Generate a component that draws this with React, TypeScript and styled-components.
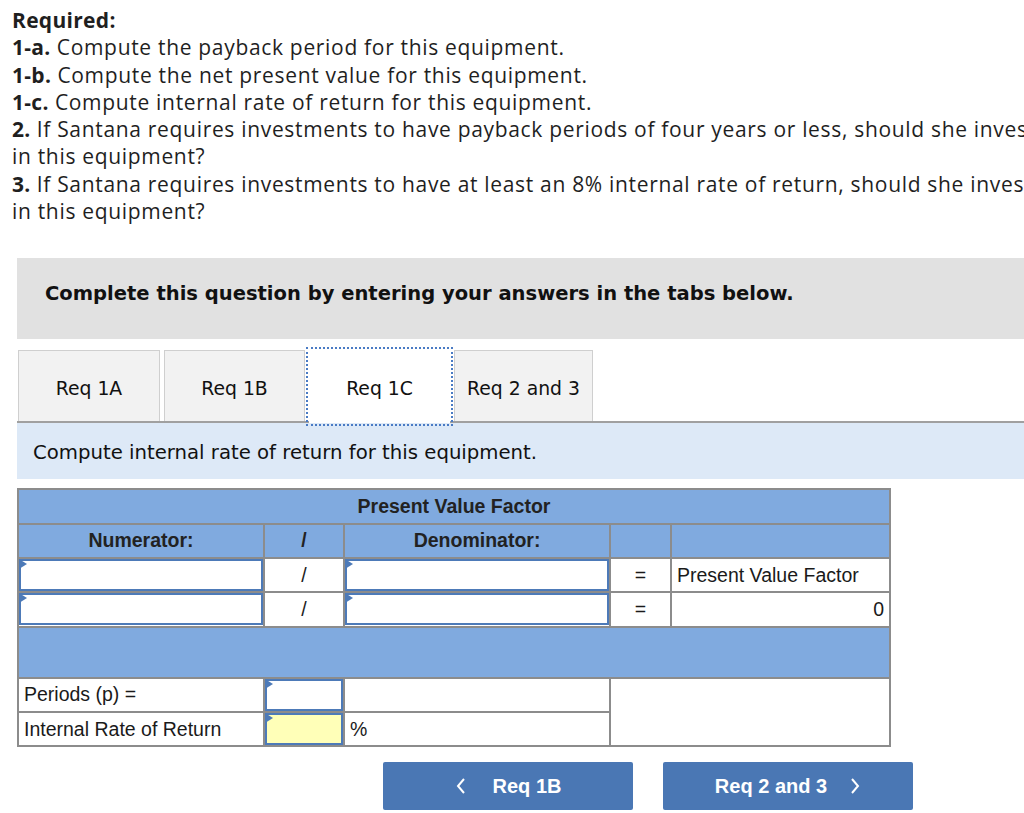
import React from "react";
import styled, { createGlobalStyle } from "styled-components";

const Global = createGlobalStyle`
  html, body { margin: 0; padding: 0; background: #fff; overflow: hidden; }
  body { width: 1024px; }
`;

const Page = styled.div`
  width: 1060px;
  padding-top: 7px;
`;

const Required = styled.div`
  margin-left: 12px;
  font-family: "Open Sans", "Liberation Sans", sans-serif;
  font-size: 21px;
  letter-spacing: 0.68px;
  line-height: 27.3px;
  color: #1f1f1f;
  overflow: hidden;
  width: 1012px;
  b { font-weight: 700; letter-spacing: 0.3px; }
`;

const Line = styled.div`
  white-space: nowrap;
`;

const Instruction = styled.div`
  margin: 33px 0 0 17px;
  height: 81px;
  box-sizing: border-box;
  background: #e1e1e1;
  padding: 24px 0 0 28px;
  font-family: "DejaVu Sans", Verdana, sans-serif;
  font-weight: 700;
  font-size: 19.55px;
  line-height: 24px;
  color: #111;
`;

const Tabs = styled.div`
  margin: 11px 0 0 18px;
  display: flex;
  align-items: flex-end;
  position: relative;
  z-index: 1;
`;

const Tab = styled.div<{ $active?: boolean; $w: number; $gap: number }>`
  width: ${(p) => p.$w}px;
  margin-right: ${(p) => p.$gap}px;
  height: 71px;
  box-sizing: border-box;
  display: flex;
  align-items: center;
  justify-content: center;
  padding-top: 4px;
  font-family: "DejaVu Sans", Verdana, sans-serif;
  font-size: 18.8px;
  color: #111;
  background: ${(p) => (p.$active ? "#fff" : "#f2f2f2")};
  border: 1px solid ${(p) => (p.$active ? "#fff" : "#cfcfcf")};
  border-bottom: none;
  ${(p) =>
    p.$active
      ? `outline: 2px dotted #4a7bc4; outline-offset: 1px; height: 73px; margin-bottom: -2px; padding-top: 2px;`
      : ""}
`;

const Band = styled.div`
  margin-left: 17px;
  height: 54px;
  background: #dde9f7;
  border-top: 2px solid #a0a0a0;
  display: flex;
  align-items: center;
  padding: 2px 0 0 16px;
  box-sizing: content-box;
  font-family: "DejaVu Sans", Verdana, sans-serif;
  font-size: 19.7px;
  color: #111;
`;

const Table = styled.table`
  margin: 9px 0 0 17px;
  border-collapse: collapse;
  width: 872px;
  table-layout: fixed;
  font-family: "Liberation Sans", Arial, sans-serif;
  font-size: 19.5px;
  color: #1a1a1a;
  border: 2px solid #8c8c8c;
`;

const HeadCell = styled.td`
  background: #80aadf;
  border: 2px solid #8c8c8c;
  height: 32.3px;
  padding: 0;
  text-align: center;
  font-weight: 700;
  color: #222;
`;

const Cell = styled.td<{ $align?: string }>`
  background: #fff;
  border: 2px solid #8c8c8c;
  height: 32.3px;
  padding: 0 5px;
  text-align: ${(p) => p.$align || "left"};
`;

const BlueRow = styled.td`
  background: #80aadf;
  border: 2px solid #8c8c8c;
  height: 49px;
  padding: 0;
`;

const InputCell = styled.td`
  border: 2px solid #8c8c8c;
  padding: 0;
  height: 32.3px;
  background: #fff;
`;

const Field = styled.div<{ $yellow?: boolean }>`
  position: relative;
  height: 32px;
  box-sizing: border-box;
  border: 2px solid #4d7ab8;
  background: ${(p) => (p.$yellow ? "#ffffb8" : "#fff")};
  &::before {
    content: "";
    position: absolute;
    left: -2px;
    top: -2px;
    border-top: 5px solid transparent;
    border-bottom: 5px solid transparent;
    border-left: 8px solid #4d7ab8;
  }
`;

const Nav = styled.div`
  width: 913px;
  display: flex;
  justify-content: flex-end;
  gap: 30px;
  margin-top: 15px;
`;

const NavButton = styled.button<{ $gap: number }>`
  width: 250px;
  height: 48px;
  border: none;
  border-radius: 2px;
  background: #4a77b4;
  color: #fff;
  font-family: "Liberation Sans", Arial, sans-serif;
  font-weight: 700;
  font-size: 20px;
  display: flex;
  align-items: center;
  justify-content: center;
  gap: ${(p) => p.$gap}px;
  padding: 0;
`;

const Chevron = ({ dir }: { dir: "left" | "right" }) => (
  <svg width="12" height="18" viewBox="0 0 12 18">
    <path
      d={dir === "left" ? "M9 2 L3 9 L9 16" : "M3 2 L9 9 L3 16"}
      fill="none"
      stroke="#fff"
      strokeWidth="2"
    />
  </svg>
);

export default function App() {
  return (
    <Page>
      <Global />
      <Required>
        <Line><b>Required:</b></Line>
        <Line><b>1-a.</b> Compute the payback period for this equipment.</Line>
        <Line><b>1-b.</b> Compute the net present value for this equipment.</Line>
        <Line><b>1-c.</b> Compute internal rate of return for this equipment.</Line>
        <Line><b>2.</b> If Santana requires investments to have payback periods of four years or less, should she invest</Line>
        <Line>in this equipment?</Line>
        <Line><b>3.</b> If Santana requires investments to have at least an 8% internal rate of return, should she invest</Line>
        <Line>in this equipment?</Line>
      </Required>
      <Instruction>Complete this question by entering your answers in the tabs below.</Instruction>
      <Tabs>
        <Tab $w={142} $gap={4}>Req 1A</Tab>
        <Tab $w={141} $gap={4}>Req 1B</Tab>
        <Tab $w={141} $gap={4} $active>Req 1C</Tab>
        <Tab $w={139} $gap={0}>Req 2 and 3</Tab>
      </Tabs>
      <Band>Compute internal rate of return for this equipment.</Band>
      <Table>
        <colgroup>
          <col style={{ width: 246 }} />
          <col style={{ width: 80 }} />
          <col style={{ width: 266 }} />
          <col style={{ width: 61 }} />
          <col style={{ width: 219 }} />
        </colgroup>
        <tbody>
          <tr>
            <HeadCell colSpan={5}>Present Value Factor</HeadCell>
          </tr>
          <tr>
            <HeadCell>Numerator:</HeadCell>
            <HeadCell>/</HeadCell>
            <HeadCell>Denominator:</HeadCell>
            <HeadCell />
            <HeadCell />
          </tr>
          <tr>
            <InputCell><Field /></InputCell>
            <Cell $align="center">/</Cell>
            <InputCell><Field /></InputCell>
            <Cell $align="center">=</Cell>
            <Cell>Present Value Factor</Cell>
          </tr>
          <tr>
            <InputCell><Field /></InputCell>
            <Cell $align="center">/</Cell>
            <InputCell><Field /></InputCell>
            <Cell $align="center">=</Cell>
            <Cell $align="right">0</Cell>
          </tr>
          <tr>
            <BlueRow colSpan={5} />
          </tr>
          <tr>
            <Cell>Periods (p) =</Cell>
            <InputCell><Field /></InputCell>
            <Cell />
            <Cell colSpan={2} rowSpan={2} />
          </tr>
          <tr>
            <Cell>Internal Rate of Return</Cell>
            <InputCell><Field $yellow /></InputCell>
            <Cell>%</Cell>
          </tr>
        </tbody>
      </Table>
      <Nav>
        <NavButton $gap={26}>
          <Chevron dir="left" />
          <span>Req 1B</span>
        </NavButton>
        <NavButton $gap={22}>
          <span>Req 2 and 3</span>
          <Chevron dir="right" />
        </NavButton>
      </Nav>
    </Page>
  );
}
